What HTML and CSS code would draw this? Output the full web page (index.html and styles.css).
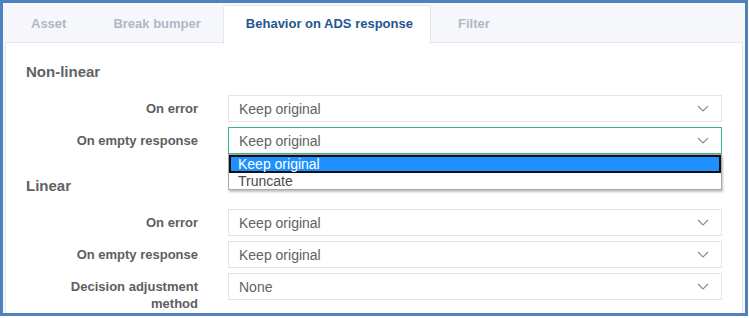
FILE: index.html
```html
<!DOCTYPE html>
<html lang="en">
<head>
    <meta charset="UTF-8">
    <meta name="viewport" content="width=device-width, initial-scale=1.0">
    <title>Ad settings</title>
    <link rel="stylesheet" href="styles.css">
</head>
<body>
    <div class="frame">
        <div class="tabs">
            <div class="tab">Asset</div>
            <div class="tab">Break bumper</div>
            <div class="tab active">Behavior on ADS response</div>
            <div class="tab">Filter</div>
        </div>

        <div class="panel">
            <h2>Non-linear</h2>
            <div class="row">
                <label>On error</label>
                <div class="select">
                    <span>Keep original</span>
                    <svg class="chevron" width="12" height="7" viewBox="0 0 12 7"><path d="M1 1l5 5 5-5" fill="none" stroke="#8a8d93" stroke-width="1.2"/></svg>
                </div>
            </div>
            <div class="row">
                <label>On empty response</label>
                <div class="select focused">
                    <span>Keep original</span>
                    <svg class="chevron" width="12" height="7" viewBox="0 0 12 7"><path d="M1 1l5 5 5-5" fill="none" stroke="#8a8d93" stroke-width="1.2"/></svg>
                    <ul class="options">
                        <li class="selected">Keep original</li>
                        <li>Truncate</li>
                    </ul>
                </div>
            </div>

            <h2 class="second">Linear</h2>
            <div class="row">
                <label>On error</label>
                <div class="select">
                    <span>Keep original</span>
                    <svg class="chevron" width="12" height="7" viewBox="0 0 12 7"><path d="M1 1l5 5 5-5" fill="none" stroke="#8a8d93" stroke-width="1.2"/></svg>
                </div>
            </div>
            <div class="row">
                <label>On empty response</label>
                <div class="select">
                    <span>Keep original</span>
                    <svg class="chevron" width="12" height="7" viewBox="0 0 12 7"><path d="M1 1l5 5 5-5" fill="none" stroke="#8a8d93" stroke-width="1.2"/></svg>
                </div>
            </div>
            <div class="row">
                <label>Decision adjustment method</label>
                <div class="select">
                    <span>None</span>
                    <svg class="chevron" width="12" height="7" viewBox="0 0 12 7"><path d="M1 1l5 5 5-5" fill="none" stroke="#8a8d93" stroke-width="1.2"/></svg>
                </div>
            </div>
        </div>
    </div>
</body>
</html>
```

FILE: styles.css
```css
body {
    margin: 0;
    background: white;
    font-family: "Liberation Sans", Arial, sans-serif;
}

.frame {
    width: 748px;
    height: 316px;
    box-sizing: border-box;
    border: 3px solid #4f81bd;
    background: #f5f7fa;
    padding: 0 2px;
    overflow: hidden;
}

.tabs {
    display: flex;
    height: 37px;
    margin-top: 2px;
}

.tab {
    padding: 0 24px;
    line-height: 36px;
    font-size: 13px;
    font-weight: bold;
    color: #b0b8c6;
    border: 1px solid transparent;
    border-bottom: none;
}

.tab:first-child {
    padding-left: 25px;
}

.tab:nth-child(2) {
    padding: 0 21px 0 21px;
}

.tab.active {
    background: white;
    color: #1f5591;
    border-color: #e4e7ed;
    border-radius: 3px 3px 0 0;
    position: relative;
    z-index: 1;
    height: 38px;
    padding: 0 17px 0 22px;
}

.tab:last-child {
    padding-left: 26px;
}

.panel {
    background: white;
    border: 1px solid #e4e7ed;
    height: 300px;
    padding: 0 20px;
}

h2 {
    margin: 19px 0 13px;
    font-size: 15px;
    line-height: 20px;
    color: #606266;
}

h2.second {
    margin-top: 22px;
}

.row {
    display: flex;
    align-items: flex-start;
    gap: 30px;
    padding-left: 22px;
    margin-bottom: 5px;
}

.row label {
    width: 150px;
    flex-shrink: 0;
    text-align: right;
    font-size: 13px;
    font-weight: bold;
    line-height: 17px;
    padding-top: 5px;
    color: #5c5e63;
}

.select {
    flex: 1;
    position: relative;
    height: 27px;
    box-sizing: border-box;
    border: 1px solid #e2e4e8;
    display: flex;
    align-items: center;
    justify-content: space-between;
    padding: 0 12px 0 10px;
    font-size: 14px;
    color: #606266;
}

.select.focused {
    border-color: #3bb394;
}

.options {
    position: absolute;
    left: -1px;
    right: -1px;
    top: 26px;
    margin: 0;
    padding: 0;
    list-style: none;
    background: white;
    border: 1px solid #a9a9a9;
    box-shadow: 1px 2px 2px rgba(0, 0, 0, 0.25);
    z-index: 2;
}

.options li {
    height: 16px;
    line-height: 16px;
    padding-left: 9px;
    font-size: 14px;
    color: #4a4a4a;
}

.options li.selected {
    background: #1e90ff;
    color: white;
    border: 2px solid #111;
    height: 14px;
    line-height: 14px;
    padding-left: 7px;
}
```
